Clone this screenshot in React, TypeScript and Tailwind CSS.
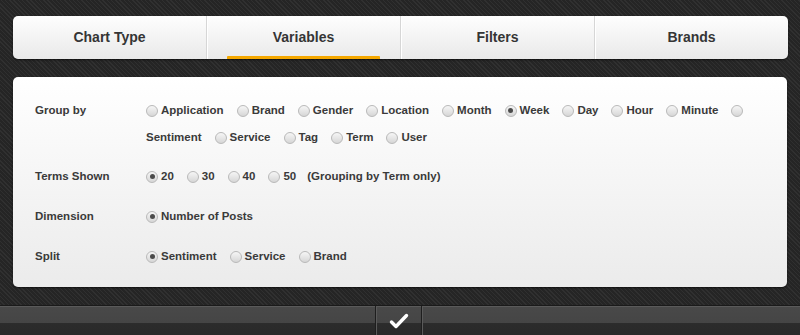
import React from "react";

const tabs = ["Chart Type", "Variables", "Filters", "Brands"];

function Radio({ checked }: { checked?: boolean }) {
  return (
    <span className="inline-flex items-center justify-center w-[12px] h-[12px] rounded-full border border-[#b9b9b9] bg-[linear-gradient(#f6f6f6,#d6d6d6)] shrink-0 mr-[3px]">
      {checked ? <span className="w-[5px] h-[5px] rounded-full bg-[#4b4b4b]" /> : null}
    </span>
  );
}

function Options({
  items,
  checked,
  note,
}: {
  items: string[];
  checked?: string;
  note?: string;
}) {
  return (
    <div className="flex flex-1 flex-wrap items-center">
      {items.map((item) => (
        <React.Fragment key={item}>
          <span className="flex items-center h-[27px]">
            <Radio checked={item === checked} />
          </span>
          <span className="h-[27px] leading-[27px] mr-[13px]">{item}</span>
        </React.Fragment>
      ))}
      {note ? <span className="h-[27px] leading-[27px] -ml-[2px]">{note}</span> : null}
    </div>
  );
}

function Row({
  label,
  children,
  className = "",
}: {
  label: string;
  children: React.ReactNode;
  className?: string;
}) {
  return (
    <div className={`flex ${className}`}>
      <div className="w-[111px] shrink-0 leading-[27px]">{label}</div>
      {children}
    </div>
  );
}

export default function App() {
  return (
    <div className="flex flex-col h-[335px] w-full overflow-hidden bg-[#2a2a2a] bg-[repeating-linear-gradient(45deg,#303030_0px,#303030_1px,#252525_1px,#252525_3px)] font-['Liberation_Sans',Arial,sans-serif] font-bold text-[#3a3a3a]">
      {/* tab bar */}
      <div className="mt-[16px] ml-[13px] mr-[12px] h-[43px] flex rounded-[5px] bg-[linear-gradient(#fefefe,#e9e9e9)] shadow-[0_1px_2px_rgba(0,0,0,0.6)]">
        {tabs.map((tab, i) => (
          <div
            key={tab}
            className={`relative flex-1 flex items-center justify-center text-[14px] text-[#353535] ${i > 0 ? "border-l border-[#d6d6d6] shadow-[inset_1px_0_0_#ffffff]" : ""}`}
          >
            {tab}
            {tab === "Variables" ? (
              <span className="absolute left-[20px] right-[20px] bottom-0 h-[3px] bg-[#f5a800] rounded-t-[1px]" />
            ) : null}
          </div>
        ))}
      </div>

      {/* panel */}
      <div className="mt-[18px] ml-[13px] mr-[13px] h-[210px] rounded-[5px] bg-[linear-gradient(#ffffff,#ebebeb)] shadow-[0_1px_2px_rgba(0,0,0,0.6)] pl-[22px] pr-[22px] pt-[20px] flex flex-col gap-[13px] text-[11.5px]">
        <Row label="Group by" className="-mb-[1px]">
          <Options
            items={[
              "Application",
              "Brand",
              "Gender",
              "Location",
              "Month",
              "Week",
              "Day",
              "Hour",
              "Minute",
              "Sentiment",
              "Service",
              "Tag",
              "Term",
              "User",
            ]}
            checked="Week"
          />
        </Row>
        <Row label="Terms Shown">
          <Options items={["20", "30", "40", "50"]} checked="20" note="(Grouping by Term only)" />
        </Row>
        <Row label="Dimension">
          <Options items={["Number of Posts"]} checked="Number of Posts" />
        </Row>
        <Row label="Split">
          <Options items={["Sentiment", "Service", "Brand"]} checked="Sentiment" />
        </Row>
      </div>

      {/* footer */}
      <div className="mt-[18px] h-[30px] flex border-t border-[#1a1a1a] bg-[linear-gradient(#494949_0px,#454545_17px,#2c2c2c_17px,#282828_30px)] shadow-[inset_0_1px_0_#5a5a5a]">
        <div className="w-[376px] border-r border-[#1e1e1e]" />
        <div className="w-[46px] flex items-center justify-center border-l border-[#5a5a5a] border-r border-r-[#1e1e1e]">
          <svg width="20" height="16" viewBox="0 0 20 16">
            <path
              d="M2.5 9 L7 13.5 L17.5 2.5"
              fill="none"
              stroke="#ffffff"
              strokeWidth="3.4"
              strokeLinecap="round"
              strokeLinejoin="round"
            />
          </svg>
        </div>
        <div className="flex-1 border-l border-[#5a5a5a]" />
      </div>
    </div>
  );
}
